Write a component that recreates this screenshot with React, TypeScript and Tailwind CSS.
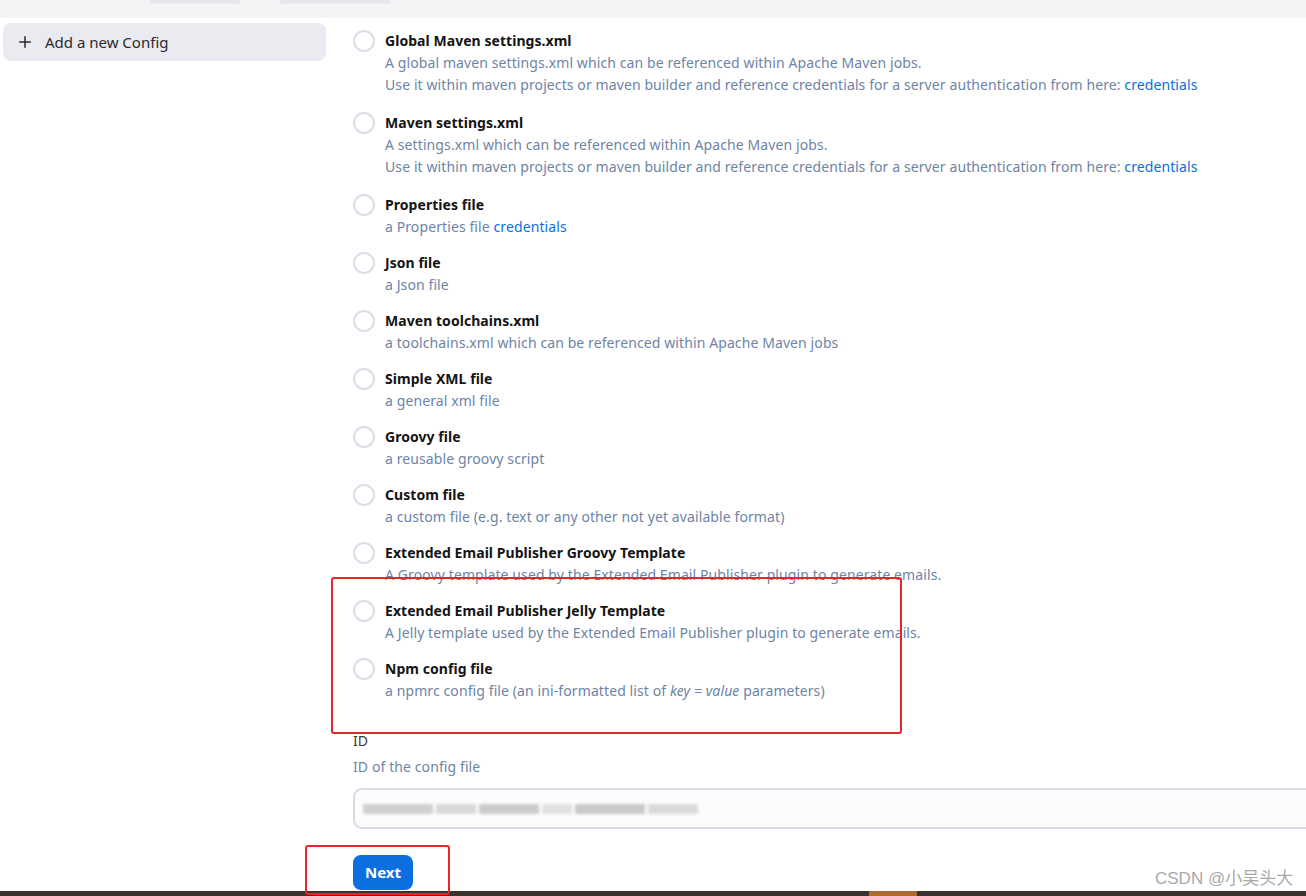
import { Plus } from 'lucide-react';

type Opt = { title: string; lines: React.ReactNode[] };

const credLink = <a className="text-[#0b6fe0]" href="#">credentials</a>;

const options: Opt[] = [
  {
    title: 'Global Maven settings.xml',
    lines: [
      'A global maven settings.xml which can be referenced within Apache Maven jobs.',
      <>Use it within maven projects or maven builder and reference credentials for a server authentication from here: {credLink}</>,
    ],
  },
  {
    title: 'Maven settings.xml',
    lines: [
      'A settings.xml which can be referenced within Apache Maven jobs.',
      <>Use it within maven projects or maven builder and reference credentials for a server authentication from here: {credLink}</>,
    ],
  },
  { title: 'Properties file', lines: [<>a Properties file {credLink}</>] },
  { title: 'Json file', lines: ['a Json file'] },
  { title: 'Maven toolchains.xml', lines: ['a toolchains.xml which can be referenced within Apache Maven jobs'] },
  { title: 'Simple XML file', lines: ['a general xml file'] },
  { title: 'Groovy file', lines: ['a reusable groovy script'] },
  { title: 'Custom file', lines: ['a custom file (e.g. text or any other not yet available format)'] },
  { title: 'Extended Email Publisher Groovy Template', lines: ['A Groovy template used by the Extended Email Publisher plugin to generate emails.'] },
  { title: 'Extended Email Publisher Jelly Template', lines: ['A Jelly template used by the Extended Email Publisher plugin to generate emails.'] },
  {
    title: 'Npm config file',
    lines: [<>a npmrc config file (an ini-formatted list of <i>key = value</i> parameters)</>],
  },
];

const Radio = () => (
  <span className="w-[22px] h-[22px] shrink-0 rounded-full border-2 border-[#d8dde7] bg-white" />
);

export default function App() {
  return (
    <div className="relative w-[1306px] h-[896px] overflow-hidden bg-white font-['Noto_Sans',sans-serif] text-[14px]">
      {/* faded header strip (blurred breadcrumb) */}
      <div className="h-[18px] bg-[#f4f4f6] flex items-start gap-[40px] pl-[150px] overflow-hidden">
        <span className="w-[90px] h-[3px] bg-[#e0e0e4] blur-[1px]" />
        <span className="w-[110px] h-[3px] bg-[#e0e0e4] blur-[1px]" />
      </div>

      <div className="flex">
        <aside className="w-[350px] shrink-0 pl-[3px] pt-[5px]">
          <div className="w-[323px] h-[38px] rounded-[8px] bg-[#eaebf0] flex items-center pl-[13px] gap-[11px] text-[#2a2a2e] text-[15px]">
            <Plus size={18} strokeWidth={2} />
            <span>Add a new Config</span>
          </div>
        </aside>

        <main className="flex-1 pl-[3px] pt-[12px]">
          <div className="flex flex-col gap-[14px]">
            {options.map((o) => (
              <div key={o.title} className={`flex gap-[10px] ${o.lines.length > 1 ? 'pb-[2px]' : ''}`}>
                <Radio />
                <div className="leading-[22px]">
                  <div className="font-bold text-[#141414] tracking-[0.05px]">{o.title}</div>
                  {o.lines.map((l, i) => (
                    <div key={i} className="text-[#6d84a6] tracking-[0.1px]">{l}</div>
                  ))}
                </div>
              </div>
            ))}
          </div>

          <div className="mt-[28px] leading-[22px] text-[#3a3a3a]">ID</div>
          <div className="mt-[4px] leading-[22px] text-[#6d84a6] tracking-[0.1px]">ID of the config file</div>

          <div className="mt-[10px] h-[41px] rounded-l-[9px] border-2 border-r-0 border-[#d6dce6] bg-[#fcfcfd] flex items-center pl-[8px]">
            <div className="flex gap-[3px] blur-[1.5px]">
              <span className="w-[70px] h-[10px] bg-[#cfcfcf]" />
              <span className="w-[40px] h-[10px] bg-[#d8d8d8]" />
              <span className="w-[60px] h-[10px] bg-[#cbcbcb]" />
              <span className="w-[30px] h-[10px] bg-[#e0e0e0]" />
              <span className="w-[70px] h-[10px] bg-[#c9c9c9]" />
              <span className="w-[50px] h-[10px] bg-[#dadada]" />
            </div>
          </div>

          <button className="mt-[26px] h-[35px] w-[60px] rounded-[8px] bg-[#0b6fe0] text-white font-bold text-[15px]">
            Next
          </button>
        </main>
      </div>

      {/* bottom dark strip */}
      <div className="absolute left-0 right-0 bottom-0 h-[5px] bg-[#3a342e]">
        <div className="absolute left-[869px] w-[48px] h-full bg-[#b16a2e]" />
      </div>

      {/* annotation boxes */}
      <div className="absolute left-[331px] top-[577px] w-[571px] h-[157px] border-2 border-[#e8262a] rounded-[3px]" />
      <div className="absolute left-[305px] top-[845px] w-[145px] h-[50px] border-2 border-[#e8262a] rounded-[3px]" />

      {/* watermark */}
      <div className="absolute left-[1155px] top-[866px] text-[17px] text-[#a9a9a9] font-['Liberation_Sans','Noto_Sans_CJK_SC',sans-serif]">
        CSDN @小吴头大
      </div>
    </div>
  );
}
